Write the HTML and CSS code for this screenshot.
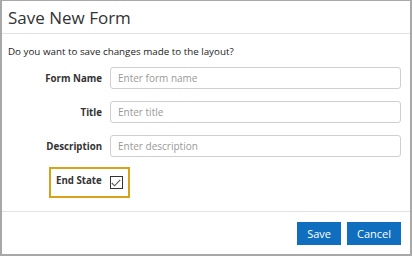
FILE: index.html
```html
<!DOCTYPE html>
<html lang="en">
<head>
  <meta charset="UTF-8">
  <title>Save New Form</title>
  <link rel="stylesheet" href="styles.css">
</head>
<body>
  <div class="modal">
    <div class="modal-header">
      <h3>Save New Form</h3>
    </div>

    <div class="modal-body">
      <p class="intro">Do you want to save changes made to the layout?</p>

      <div class="form-row">
        <label for="form-name">Form Name</label>
        <input type="text" id="form-name" placeholder="Enter form name">
      </div>
      <div class="form-row">
        <label for="form-title">Title</label>
        <input type="text" id="form-title" placeholder="Enter title">
      </div>
      <div class="form-row">
        <label for="form-desc">Description</label>
        <input type="text" id="form-desc" placeholder="Enter description">
      </div>

      <div class="end-state">
        <label for="end-state">End State</label>
        <span class="check" id="end-state">
          <svg width="10" height="8" viewBox="0 0 10 8"><path d="M0.8 4 L3.6 6.8 L9.2 0.9" fill="none" stroke="#555" stroke-width="1.1"/></svg>
        </span>
      </div>
    </div>

    <div class="modal-footer">
      <button class="btn">Save</button>
      <button class="btn">Cancel</button>
    </div>
  </div>
</body>
</html>
```

FILE: styles.css
```css
body {
  margin: 0;
  font-family: 'Open Sans', sans-serif;
  color: #333;
  background-color: #fff;
}

.modal {
  width: 412px;
  height: 256px;
  box-sizing: border-box;
  border: 1px solid #a8a8a8;
  border-left-width: 2px;
  border-right-width: 2px;
  border-bottom-width: 2px;
  background-color: #fff;
}

.modal-header {
  height: 32px;
  padding: 0 6px;
  border-bottom: 1px solid #e2e2e2;
  display: flex;
  align-items: center;
}

.modal-header h3 {
  margin: 0;
  font-size: 17px;
  font-weight: normal;
  color: #333;
}

.modal-body {
  padding: 0 9px 0 6px;
  height: 177px;
  border-bottom: 1px solid #e2e2e2;
}

.intro {
  margin: 0;
  padding-top: 11px;
  font-size: 9.8px;
  line-height: 14px;
  color: #222;
}

.form-row {
  display: flex;
  align-items: center;
  margin-top: 8px;
}

.form-row + .form-row {
  margin-top: 12px;
}

.form-row label {
  width: 94px;
  text-align: right;
  font-size: 9.7px;
  font-weight: bold;
  color: #333;
  margin-right: 8px;
}

.form-row input {
  flex-grow: 1;
  height: 22px;
  box-sizing: border-box;
  padding: 0 7px;
  border: 1px solid #cfcfcf;
  border-radius: 3px;
  font-family: 'Open Sans', sans-serif;
  font-size: 10px;
  color: #333;
}

.form-row input::placeholder {
  color: #999;
}

.end-state {
  display: inline-flex;
  align-items: center;
  margin-top: 10px;
  margin-left: 41px;
  width: 81px;
  height: 31px;
  box-sizing: border-box;
  border: 2px solid #d9a21b;
  padding-left: 5px;
}

.end-state label {
  font-size: 9.7px;
  font-weight: bold;
  color: #333;
  margin-right: 8px;
  margin-top: -4px;
}

.check {
  width: 13px;
  height: 13px;
  box-sizing: border-box;
  border: 1px solid #333;
  display: flex;
  align-items: center;
  justify-content: center;
}

.modal-footer {
  display: flex;
  justify-content: flex-end;
  gap: 6px;
  padding: 10px 9px 0 0;
}

.btn {
  height: 23px;
  padding: 0 10px;
  border: none;
  background-color: #106ebe;
  color: #fff;
  font-family: 'Open Sans', sans-serif;
  font-size: 11px;
}
```
